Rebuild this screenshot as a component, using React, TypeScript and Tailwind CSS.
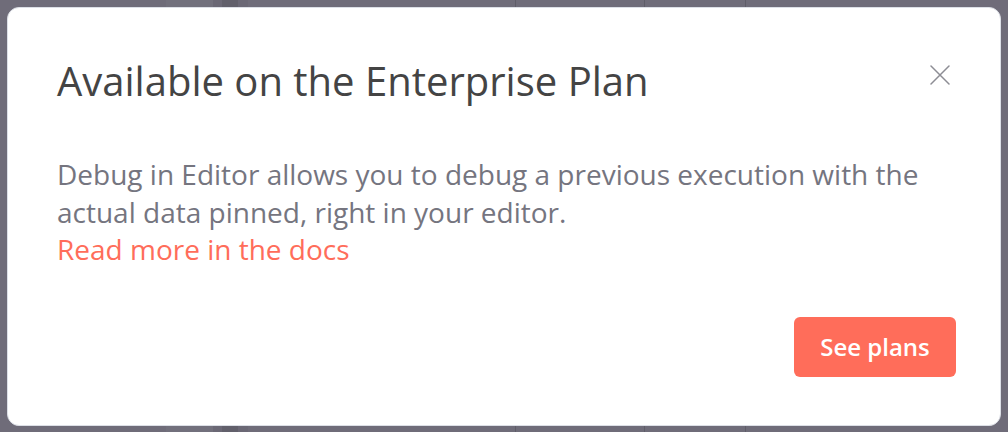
import React from "react";

export default function App() {
  return (
    <div className="relative w-[1008px] h-[432px] overflow-hidden bg-[#6f6c79]" style={{ fontFamily: '"Open Sans", sans-serif' }}>
      {/* backdrop page content dimmed */}
      <div className="flex h-full w-full">
        <div className="w-[166px] h-full bg-[#6f6c79]" />
        <div className="w-[47px] h-full bg-[#72707c]" />
        <div className="w-[9px] h-full bg-[#6b6875]" />
        <div className="w-[16px] h-full bg-[#62606b]" />
        <div className="w-[10px] h-full bg-[#6b6875]" />
        <div className="w-[268px] h-full bg-[#6f6c79] border-r border-[#5f5d68]" />
        <div className="w-[129px] h-full bg-[#6f6c79] border-r border-[#5f5d68]" />
        <div className="w-[101px] h-full bg-[#6f6c79] border-r border-[#5f5d68]" />
        <div className="flex-1 h-full bg-[#6f6c79]" />
      </div>

      {/* modal */}
      <div className="absolute left-[7px] top-[7px] w-[994px] h-[419px] bg-white rounded-[12px] border border-[#dcdfe6] flex flex-col pl-[49px] pr-[44px] pt-[46px] pb-[48px]">
        <div className="flex items-start justify-between">
          <h2 className="text-[40px] leading-[54px] text-[#444444] font-normal">Available on the Enterprise Plan</h2>
          <button className="mt-[9px] mr-[4px] w-[24px] h-[24px] flex items-center justify-center">
            <svg width="20" height="20" viewBox="0 0 20 20" fill="none">
              <path d="M1 1L19 19M19 1L1 19" stroke="#8d8d94" strokeWidth="1.5" strokeLinecap="round" />
            </svg>
          </button>
        </div>
        <div className="mt-[48px] text-[28px] leading-[37.5px] text-[#75757f]">
          <p>Debug in Editor allows you to debug a previous execution with the actual data pinned, right in your editor.</p>
          <a className="text-[#ff6d5a]">Read more in the docs</a>
        </div>
        <div className="mt-auto flex justify-end">
          <button className="w-[162px] h-[60px] rounded-[6px] bg-[#ff6d5a] text-white text-[24px] font-semibold">See plans</button>
        </div>
      </div>
    </div>
  );
}
